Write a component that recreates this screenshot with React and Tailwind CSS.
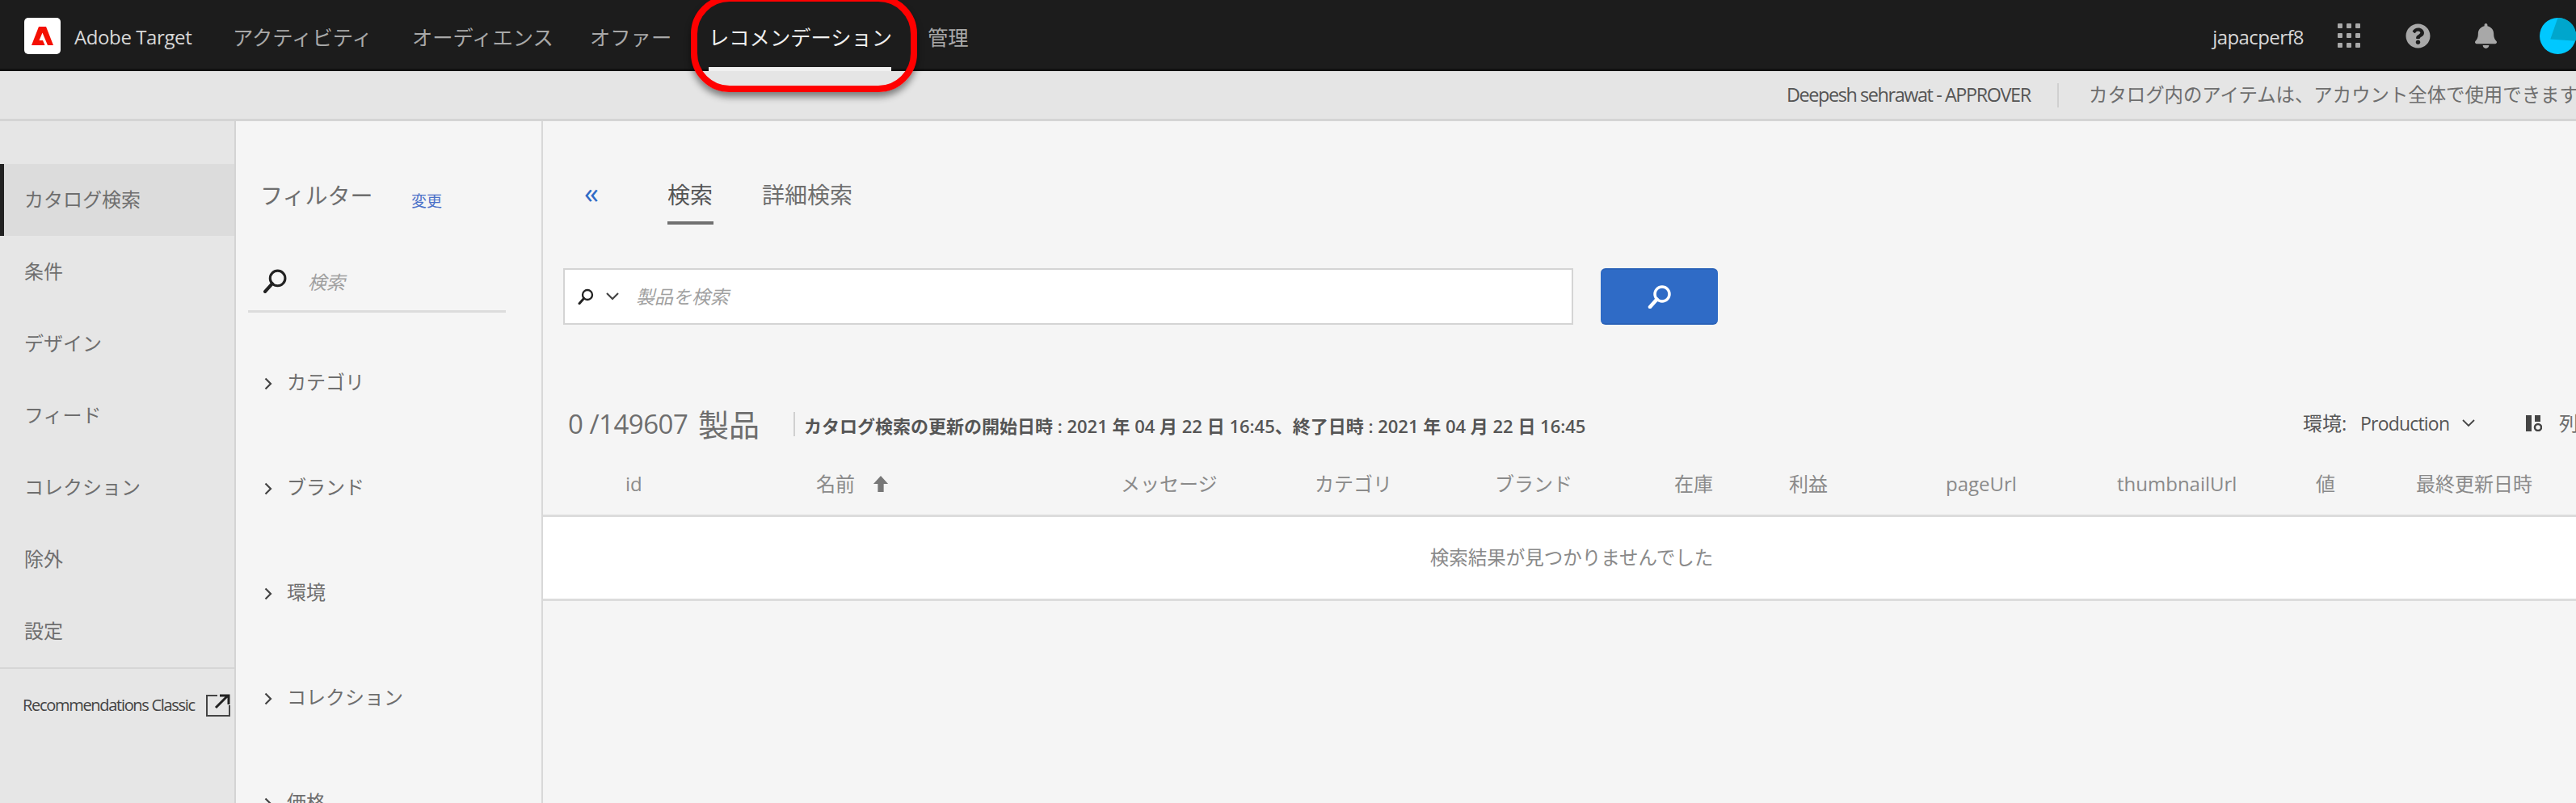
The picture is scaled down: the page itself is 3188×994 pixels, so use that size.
import React from "react";
import { FaQuestionCircle, FaBell } from "react-icons/fa";

const Lens = ({ className, color = "#222", sw = 3 }) => (
  <svg viewBox="0 0 30 30" className={className} fill="none" stroke={color} strokeWidth={sw}>
    <circle cx="18" cy="12" r="9" />
    <path d="M11.5 18.5 L3 28" strokeLinecap="round" strokeWidth={sw + 1} />
  </svg>
);

const Chev = ({ className }) => (
  <svg viewBox="0 0 10 16" className={className} fill="none" stroke="#444" strokeWidth="2.2">
    <path d="M1.5 1.5 L8 8 L1.5 14.5" />
  </svg>
);

const NAV = [
  ["アクティビティ", "w-[222px]"],
  ["オーディエンス", "w-[220px]"],
  ["オファー", "w-[147px]"],
  ["レコメンデーション", "w-[271px]"],
  ["管理", "w-[60px]"],
];
const SIDE = ["カタログ検索", "条件", "デザイン", "フィード", "コレクション", "除外", "設定"];
const FILTERS = ["カテゴリ", "ブランド", "環境", "コレクション", "価格"];
const COLS = ["id", "名前", "メッセージ", "カテゴリ", "ブランド", "在庫", "利益", "pageUrl", "thumbnailUrl", "値", "最終更新日時"];

export default function App() {
  return (
    <div className="relative w-[3188px] h-[994px] overflow-hidden bg-[#f5f5f5] text-[#6e6e6e] flex flex-col font-['Open_Sans','Noto_Sans_CJK_JP',sans-serif]">
      <header className="h-[88px] shrink-0 bg-[#1c1c1c] flex items-center pl-[30px] pt-[3px] border-b-[3px] border-b-[#111]">
        <div className="w-[45px] h-[45px] rounded-[5px] bg-white flex items-center justify-center shrink-0">
          <svg viewBox="0 0 27 23" className="w-[27px] h-[23px]" fill="#f40f02">
            <path d="M9 0 H18 L27 23 H20 L13.5 7.5 L9.5 17 H14 L16.5 23 H0 Z" />
          </svg>
        </div>
        <span className="ml-[17px] w-[196px] pt-[4px] text-[24px] tracking-[-0.4px] text-[#d8d8d8] whitespace-nowrap">Adobe Target</span>
        {NAV.map(([t, w], i) => (
          <div key={t} className={`${w} shrink-0 h-full flex items-center pt-[5px] text-[25.3px] whitespace-nowrap ${i === 3 ? "text-[#f0f0f0]" : "text-[#a8a8a8]"}`}>
            {t}
          </div>
        ))}
        <div className="ml-auto flex items-center">
          <span className="text-[24px] tracking-[-0.6px] pt-[4px] text-[#d8d8d8] mr-[42px]">japacperf8</span>
          <div className="grid grid-cols-3 gap-x-[5px] gap-y-[6px] mr-[56px]">
            {Array.from({ length: 9 }).map((_, i) => (
              <div key={i} className="w-[6px] h-[6px] rounded-[1px] bg-[#a8a8a8]" />
            ))}
          </div>
          <FaQuestionCircle className="w-[31px] h-[31px] text-[#a8a8a8] mr-[55px]" />
          <FaBell className="w-[27px] h-[33px] text-[#a8a8a8] mr-[53px]" />
          <svg viewBox="0 0 44 44" className="w-[45px] h-[45px]">
            <circle cx="22" cy="22" r="22" fill="#00c8ff" />
            <path d="M22 0 A22 22 0 0 1 43.5 28 L13 26 Z" fill="#00a6cc" />
          </svg>
        </div>
      </header>

      <div className="h-[62px] shrink-0 bg-[#e5e5e5] border-b-[3px] border-b-[#d4d4d4] flex items-center pl-[2211px] whitespace-nowrap text-[23.4px] overflow-hidden">
        <span className="tracking-[-1.4px] text-[#555] w-[335px] shrink-0">Deepesh sehrawat - APPROVER</span>
        <span className="w-[2px] h-[30px] bg-[#d0d0d0] shrink-0" />
        <span className="ml-[37px] shrink-0">カタログ内のアイテムは、アカウント全体で使用できます</span>
      </div>

      <div className="flex flex-1 min-h-0">
        <aside className="w-[292px] shrink-0 bg-[#e6e6e6] border-r-[2px] border-r-[#d4d4d4] pt-[53px] flex flex-col">
          {SIDE.map((t, i) => (
            <div key={t} className={`h-[89px] shrink-0 flex items-center pb-[2px] text-[24px] ${i === 0 ? "bg-[#dcdcdc] border-l-[5px] border-l-[#222] pl-[25px]" : "pl-[30px]"}`}>
              {t}
            </div>
          ))}
          <div className="border-t-[2px] border-t-[#d6d6d6] pt-[30px] pl-[28px] flex items-center">
            <span className="text-[20px] tracking-[-1.3px] text-[#444] whitespace-nowrap w-[227px] shrink-0">Recommendations Classic</span>
            <svg viewBox="0 0 30 28" className="w-[30px] h-[28px] shrink-0" fill="none" stroke="#444" strokeWidth="2">
              <path d="M14 2 H1 V27 H29 V14" />
              <path d="M12 17 L26 3 M17 2 H28 V13" strokeWidth="3" stroke="#222" />
            </svg>
          </div>
        </aside>

        <section className="w-[380px] shrink-0 border-r-[2px] border-r-[#d8d8d8] pl-[15px]">
          <div className="flex items-center pl-[15px] pt-[71px]">
            <span className="text-[28px] w-[187px] leading-[40px]">フィルター</span>
            <span className="text-[19px] text-[#4a70c8] mt-[14px]">変更</span>
          </div>
          <div className="w-[319px] mt-[60px] h-[63px] border-b-[3px] border-b-[#dcdcdc] flex items-start pl-[18px] pt-[8px]">
            <Lens className="w-[31px] h-[31px]" />
            <span className="ml-[25px] text-[23px] italic text-[#a0a0a0] leading-[34px]">検索</span>
          </div>
          <div className="flex flex-col pt-[68px]">
            {FILTERS.map((t) => (
              <div key={t} className="h-[130px] shrink-0 flex items-start pl-[20px] gap-[18px] text-[24px]">
                <Chev className="w-[10px] h-[16px] mt-[12px] shrink-0" />
                <span className="leading-[36px]">{t}</span>
              </div>
            ))}
          </div>
        </section>

        <main className="flex-1 min-w-0 flex flex-col">
          <div className="flex items-start pl-[51px] pt-[67px] h-[182px] shrink-0">
            <span className="w-[103px] text-[#2f6bc6] text-[36px] leading-[44px]">«</span>
            <div className="w-[117px] flex flex-col items-start">
              <span className="w-[57px] text-[28px] leading-[48px] text-[#555] pb-[9px] border-b-[4px] border-b-[#707070] whitespace-nowrap">検索</span>
            </div>
            <span className="text-[28px] leading-[48px]">詳細検索</span>
          </div>
          <div className="flex pl-[25px] shrink-0">
            <div className="w-[1250px] h-[70px] bg-white border-2 border-[#d4d4d4] flex items-center pl-[16px]">
              <Lens className="w-[20px] h-[20px]" sw={3.5} />
              <svg viewBox="0 0 16 10" className="w-[16px] h-[10px] ml-[15px]" fill="none" stroke="#444" strokeWidth="2.2"><path d="M1 1 L8 8 L15 1" /></svg>
              <span className="ml-[21px] text-[23px] italic text-[#a0a0a0]">製品を検索</span>
            </div>
            <div className="ml-[34px] w-[145px] h-[70px] rounded-[6px] bg-[#2f6bc6] border-t-2 border-b-2 border-[#2a62b8] flex items-center justify-center">
              <Lens className="w-[30px] h-[30px]" color="#fff" sw={3.5} />
            </div>
          </div>
          <div className="flex items-center pl-[31px] mt-[94px] h-[58px] shrink-0 whitespace-nowrap">
            <span className="text-[33px] tracking-[-0.5px] w-[155px] shrink-0">0 /149607</span>
            <span className="text-[38px] ml-[6px] w-[118px] shrink-0">製品</span>
            <span className="w-[2px] h-[30px] bg-[#d0d0d0] shrink-0" />
            <span className="ml-[11px] pt-[4px] text-[22px] font-semibold text-[#555] w-[1855px] shrink-0">カタログ検索の更新の開始日時 : 2021 年 04 月 22 日 16:45、終了日時 : 2021 年 04 月 22 日 16:45</span>
            <span className="text-[24px] text-[#555] w-[71px] shrink-0 pb-[2px]">環境:</span>
            <span className="text-[23px] tracking-[-0.8px] text-[#555] w-[126px] shrink-0 pb-[2px]">Production</span>
            <svg viewBox="0 0 16 10" className="w-[16px] h-[10px] shrink-0 mb-[2px]" fill="none" stroke="#444" strokeWidth="1.8"><path d="M1 1 L8 8 L15 1" /></svg>
            <svg viewBox="0 0 20 20" className="ml-[63px] w-[20px] h-[20px] shrink-0 mb-[2px]" fill="#444">
              <rect x="0" y="0" width="7" height="20" />
              <rect x="11" y="0" width="7" height="8" />
              <circle cx="15" cy="15" r="4" fill="none" stroke="#444" strokeWidth="2.5" />
            </svg>
            <span className="ml-[21px] text-[24px] shrink-0 pb-[2px]">列</span>
          </div>
          <div className="grid grid-cols-[236px_377px_240px_223px_222px_142px_194px_212px_246px_124px_198px] pl-[102px] pt-[6px] h-[83px] shrink-0 items-center text-[24px] text-[#8a8a8a] whitespace-nowrap">
            {COLS.map((c, i) => (
              <div key={c} className="flex items-center gap-[22px]">
                <span>{c}</span>
                {i === 1 && (
                  <svg viewBox="0 0 20 22" className="w-[20px] h-[20px]" fill="#777"><path d="M10 0 L20 11 H14 V22 H6 V11 H0 Z" /></svg>
                )}
              </div>
            ))}
          </div>
          <div className="h-[107px] shrink-0 bg-white border-t-[3px] border-t-[#dcdcdc] border-b-[3px] border-b-[#dcdcdc] flex items-center justify-center pl-[30px] text-[23.5px] text-[#8a8a8a]">
            検索結果が見つかりませんでした
          </div>
        </main>
      </div>

      <div className="absolute left-[855px] top-[-6px] w-[280px] h-[120px] rounded-[48px] border-[8px] border-[#f00] shadow-[0_6px_8px_rgba(0,0,0,0.45)]" />
      <div className="absolute left-[877px] top-[83px] w-[226px] h-[5px] bg-[#f0f0f0]" />
    </div>
  );
}
